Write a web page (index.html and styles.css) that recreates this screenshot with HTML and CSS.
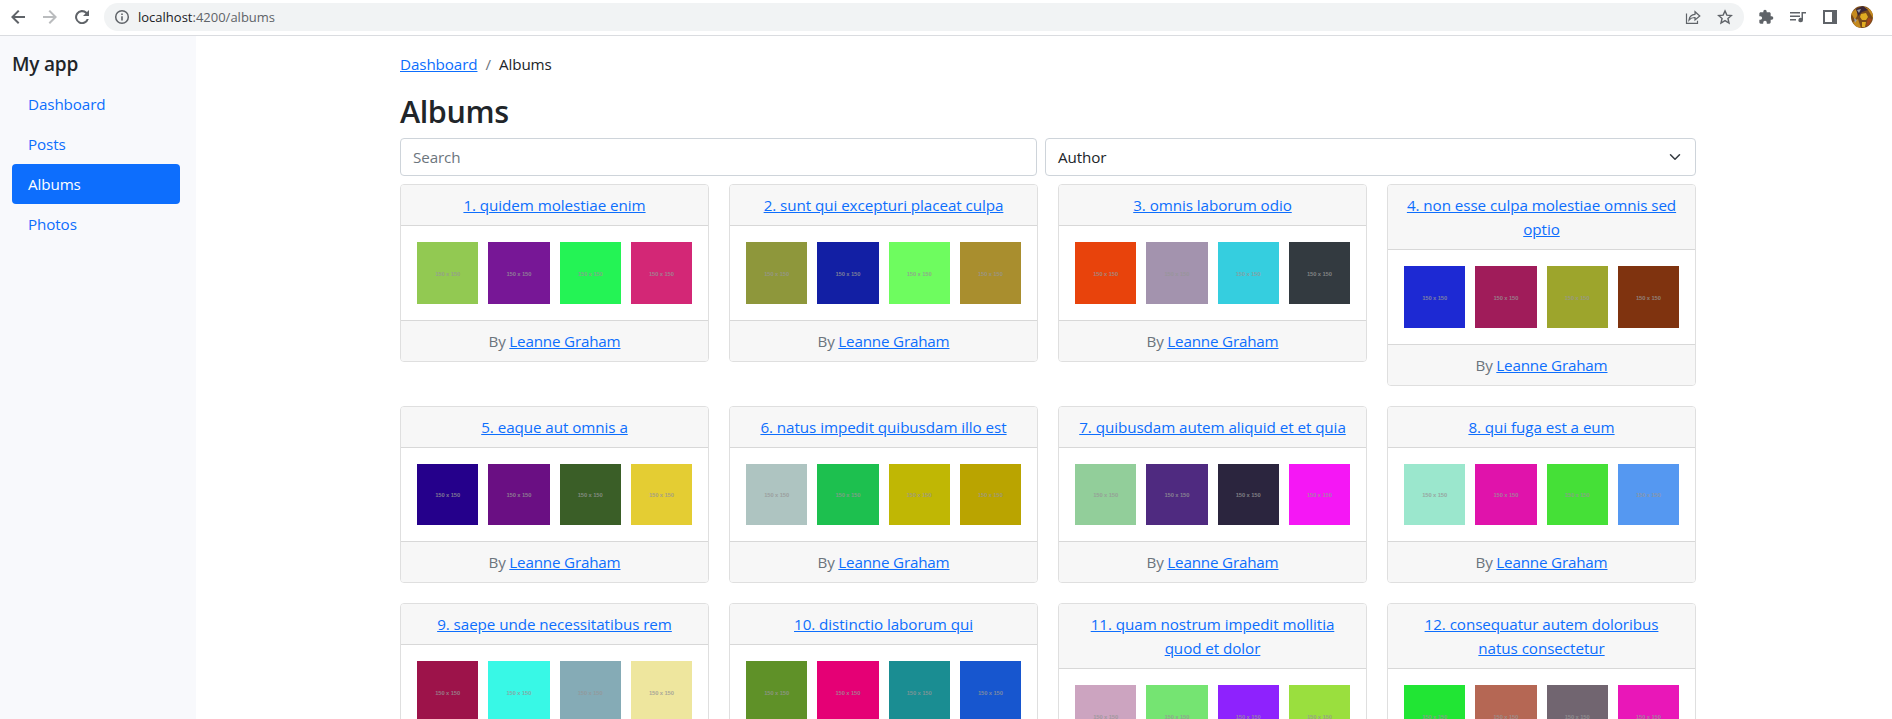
FILE: index.html
```html
<!DOCTYPE html>
<html lang="en">
<head>
<meta charset="utf-8">
<title>Albums</title>
<link rel="stylesheet" href="styles.css">
</head>
<body>
<header class="toolbar">
  <svg class="icon back" viewBox="0 0 16 16"><path d="M15 7H4.800l4.700-4.700L8 1 1 8l7 7 1.400-1.400L4.800 9H15z"/></svg>
  <svg class="icon forward" viewBox="0 0 16 16"><path d="M1 7h10.200l-4.700-4.700L8 1l7 7-7 7-1.400-1.400L11.200 9H1z"/></svg>
  <svg class="icon reload" viewBox="0 0 16 16"><path d="M13 3.100A7 7 0 1 0 14.800 10h-2.100A5 5 0 1 1 11.500 4.500L9 7h6V1z"/></svg>
  <div class="omnibox">
    <svg class="icon info" viewBox="0 0 16 16"><circle cx="8" cy="8" r="6.300" fill="none" stroke="#5f6368" stroke-width="1.500"/><path d="M7.200 7.200h1.600v4.300H7.200zM7.200 4.400h1.600V6H7.200z"/></svg>
    <span class="url"><span class="host">localhost</span>:4200/albums</span>
    <svg class="icon share" viewBox="0 0 16 16"><path d="M1.500 4.500v9.800h11v-2.500M4 11c.5-3.700 2.500-5.500 6-5.700V2.700L14.800 7 10 11V8.500C7.300 8.400 5.500 9.200 4 11z" fill="none" stroke="#5f6368" stroke-width="1.200"/></svg>
    <svg class="icon star" viewBox="0 0 16 16"><path d="M8 1.900l1.850 4.200 4.600.4-3.500 3 1.050 4.500L8 11.600 4 14l1.050-4.500-3.500-3 4.600-.4z" fill="none" stroke="#5f6368" stroke-width="1.400"/></svg>
  </div>
  <svg class="icon puzzle" viewBox="0 0 24 24"><path d="M20.500 11H19V7c0-1.100-.9-2-2-2h-4V3.500a2.500 2.500 0 0 0-5 0V5H4c-1.100 0-2 .9-2 2v3.800h1.500a2.700 2.700 0 0 1 0 5.400H2V20c0 1.100.9 2 2 2h3.800v-1.500a2.700 2.700 0 0 1 5.400 0V22H17c1.100 0 2-.9 2-2v-4h1.500a2.500 2.500 0 0 0 0-5z"/></svg>
  <svg class="icon queue" viewBox="0 0 17 16"><path d="M1 3h10v1.500H1zM1 6.500h10V8H1zM1 10h6v1.500H1zM12.500 3H17v1.500h-3V11a2.300 2.300 0 1 1-1.500-2.100z"/></svg>
  <svg class="icon panel" viewBox="0 0 14 14"><path d="M0 0h14v14H0zM2 2v10h7V2z" fill-rule="evenodd"/></svg>
  <svg class="avatar" viewBox="0 0 22 22"><clipPath id="round"><circle cx="11" cy="11" r="11"/></clipPath><g clip-path="url(#round)"><path fill="#7a4a1a" d="M0 0h22v22H0z"/><path fill="#c58a1e" d="M12 0l10 5v7l-5-8zM0 7l5-4 2 5-3 6zM2 16l5-3 3 9-6-1z"/><path fill="#3b2636" d="M5 3l7-3 5 4-6 2-4 4z"/><path fill="#9aa0a8" d="M6 4l4-1-2 4zM3 12l3 2-2 3z"/><path fill="#e0ac22" d="M10 8l5-1 2 4-2 3h-4l-2-3zM11 16h4l-1 5h-3z"/><path fill="#a5481a" d="M17 12l4 1-3 6-3 1z"/></g></svg>
</header>
<div class="app">
  <aside class="sidebar">
    <h5 class="brand">My app</h5>
    <nav class="nav">
      <a class="nav-link">Dashboard</a>
      <a class="nav-link">Posts</a>
      <a class="nav-link active">Albums</a>
      <a class="nav-link">Photos</a>
    </nav>
  </aside>
  <main class="main">
    <div class="breadcrumb"><a class="link">Dashboard</a><span class="slash">/</span><span>Albums</span></div>
    <h2 class="title">Albums</h2>
    <div class="filters">
      <div class="field search">Search</div>
      <div class="field select"><span>Author</span><svg class="chevron" viewBox="0 0 16 16"><path d="M2 5l6 6 6-6" fill="none" stroke="#343a40" stroke-width="2" stroke-linecap="round" stroke-linejoin="round"/></svg></div>
    </div>
    <div class="grid" id="grid"></div>
  </main>
</div>
<script src="albums.js"></script>
</body>
</html>
```
FILE: styles.css
```css
* { box-sizing: border-box; }
body {
  margin: 0;
  height: 719px;
  overflow: hidden;
  display: flex;
  flex-direction: column;
  background: #fff;
  color: #212529;
  font: 15.2px/24px "Open Sans", "Noto Sans", sans-serif;
  letter-spacing: -0.1px;
}
.toolbar {
  flex: none;
  height: 36px;
  display: flex;
  align-items: center;
  padding: 0 19px 2px 10px;
  border-bottom: 1px solid #dadce0;
}
.icon { flex: none; width: 16px; height: 16px; fill: #5f6368; }
.forward { margin-left: 16px; fill: #babcbe; }
.reload { margin-left: 16px; }
.omnibox {
  flex: 1;
  height: 28px;
  margin: 0 14px;
  padding: 0 10px;
  display: flex;
  align-items: center;
  border-radius: 14px;
  background: #f1f3f4;
}
.url { flex: 1; margin-left: 8px; font-size: 13px; letter-spacing: 0; color: #5f6368; }
.host { color: #202124; }
.star { margin-left: 16px; margin-right: 1px; }
.queue { margin-left: 15px; width: 17px; }
.panel { margin-left: 17px; width: 14px; height: 14px; }
.avatar { margin-left: 14px; width: 22px; height: 22px; }
.app { flex: 1; min-height: 0; display: flex; }
.sidebar { flex: none; width: 196px; padding: 16px 16px 0 12px; background: #f8f9fc; }
.brand { margin: 0 0 8px; font-size: 19px; font-weight: 600; line-height: 24px; letter-spacing: -0.2px; }
.nav { display: flex; flex-direction: column; }
.nav-link { padding: 8px 16px; border-radius: 4px; color: #0d6efd; }
.nav-link.active { background: #0d6efd; color: #fff; }
.main { width: 1500px; padding: 16px 0 0 204px; }
.link { color: #0d6efd; text-decoration: underline; }
.breadcrumb { display: flex; gap: 8px; margin-bottom: 16px; }
.slash { color: #6c757d; }
.title { margin: 0 0 8px; font-size: 30.500px; font-weight: 600; line-height: 38.400px; letter-spacing: -0.4px; }
.filters { width: 1296px; display: flex; gap: 8px; margin-bottom: 8px; }
.field { height: 38px; padding: 6px 12px; border: 1px solid #ced4da; border-radius: 4px; }
.search { width: 637px; color: #6c757d; }
.select { flex: 1; display: flex; align-items: center; justify-content: space-between; }
.chevron { width: 12px; height: 12px; margin-right: 2px; }
.grid { width: 1296px; display: grid; grid-template-columns: repeat(4, 1fr); gap: 20px; align-items: start; }
.card { border: 1px solid #dfdfdf; border-radius: 4px; overflow: hidden; text-align: center; }
.card-header, .card-footer { padding: 8px 16px; background: #f7f7f7; }
.card-header { border-bottom: 1px solid #d8d8d8; letter-spacing: -0.06px; }
.card-footer { border-top: 1px solid #d8d8d8; color: #6c757d; letter-spacing: -0.18px; }
.card-body { display: grid; grid-template-columns: repeat(4, 1fr); gap: 10px; padding: 16px; }
.thumb {
  aspect-ratio: 1;
  display: flex;
  align-items: center;
  justify-content: center;
  padding-top: 2px;
  font: bold 5.800px/6px "Liberation Sans", sans-serif;
  letter-spacing: -0.1px;
  color: rgba(150, 150, 150, 0.8);
}
```
FILE: albums.js
```js
const albums = [
  ["quidem molestiae enim", "#92c952 #771796 #24f355 #d32776"],
  ["sunt qui excepturi placeat culpa", "#8e973b #121fa4 #6efc5f #a98e2e"],
  ["omnis laborum odio", "#e8430c #a393ae #35cedf #333a40"],
  ["non esse culpa molestiae omnis sed optio", "#1d29d3 #a01c5a #9da52c #7f330f"],
  ["eaque aut omnis a", "#25008b #6a0f83 #3a5e27 #e4cd33"],
  ["natus impedit quibusdam illo est", "#aec4c1 #1dc04f #c0b704 #baa400"],
  ["quibusdam autem aliquid et et quia", "#92ce9a #4f2a80 #2b253e #f517f5"],
  ["qui fuga est a eum", "#9be7cd #e013ab #45e037 #5598f1"],
  ["saepe unde necessitatibus rem", "#9d134a #38f8e6 #85abb6 #eee69e"],
  ["distinctio laborum qui", "#5f9128 #e50075 #1a8d92 #1756cf"],
  ["quam nostrum impedit mollitia quod et dolor", "#cca4c0 #75e472 #8e22fd #9adf3e"],
  ["consequatur autem doloribus natus consectetur", "#21e534 #b56754 #716570 #e917b8"],
];

document.getElementById("grid").innerHTML = albums.map(([title, colors], i) => `
  <article class="card">
    <div class="card-header"><a class="link">${i + 1}. ${title}</a></div>
    <div class="card-body">${colors.split(" ").map(c => `<div class="thumb" style="background:${c}">150 x 150</div>`).join("")}</div>
    <div class="card-footer">By <a class="link">Leanne Graham</a></div>
  </article>`).join("");
```
